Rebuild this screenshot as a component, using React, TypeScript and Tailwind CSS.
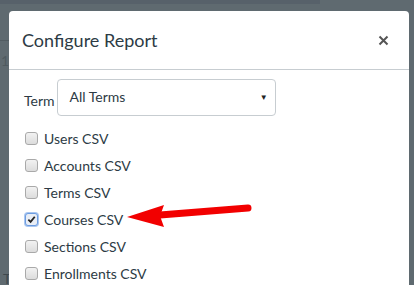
const reports = [
  { name: "Users CSV", checked: false },
  { name: "Accounts CSV", checked: false },
  { name: "Terms CSV", checked: false },
  { name: "Courses CSV", checked: true },
  { name: "Sections CSV", checked: false },
  { name: "Enrollments CSV", checked: false },
];

function Checkbox({ checked }: { checked: boolean }) {
  if (checked) {
    return (
      <span className="flex h-[13px] w-[13px] items-center justify-center rounded-[3px] border border-[#6c9ce0] bg-[#e9eef6] shadow-[0_0_0_1px_#a9c6f0]">
        <svg width="9" height="9" viewBox="0 0 10 10">
          <path d="M1.5 5.2 L4 7.6 L8.6 2" fill="none" stroke="#222" strokeWidth="2" />
        </svg>
      </span>
    );
  }
  return <span className="h-[13px] w-[13px] rounded-[3px] border border-[#a9a9a9] bg-gradient-to-b from-[#f2f2f2] to-[#dcdcdc]" />;
}

export default function App() {
  return (
    <div className="relative h-[285px] w-[414px] overflow-hidden bg-[#5f6a70] font-['Lato',sans-serif]">
      {/* page behind the overlay */}
      <div className="absolute left-0 top-0 h-[4px] w-[320px] bg-[#57616a]" />
      <div className="absolute left-0 top-[40px] h-px w-[9px] bg-[#525c62]" />
      <div className="absolute left-[1px] top-[50px] text-[14px] text-[#4f5a60]">15</div>
      <div className="absolute left-[3px] top-[268px] text-[14px] text-[#3e484e]">T</div>

      <div className="absolute left-[9px] top-[11px] h-[300px] w-[400px] rounded-[4px] bg-white">
        {/* header */}
        <div className="flex h-[59px] items-center justify-between border-b border-[#c7cdd1] pl-[13px] pr-[20px]">
          <h2 className="text-[18px] font-normal text-[#2d3b45]">Configure Report</h2>
          <svg width="11" height="11" viewBox="0 0 11 11">
            <path d="M1.5 1.5 L9.5 9.5 M9.5 1.5 L1.5 9.5" stroke="#555" strokeWidth="2" />
          </svg>
        </div>

        {/* body */}
        <div className="pl-[15px] pt-[9px]">
          <div className="flex items-end gap-[2px]">
            <span className="mb-[5px] text-[14px] text-[#2d3b45]">Term</span>
            <div className="flex h-[37px] w-[219px] items-center justify-between rounded-[4px] border border-[#c7cdd1] pl-[12px] pr-[7px] text-[14px] text-[#2d3b45]">
              <span className="-mt-[2px]">All Terms</span>
              <span className="-mt-[2px] text-[8px] text-[#222]">▼</span>
            </div>
          </div>

          <div className="mt-[9px] flex flex-col">
            {reports.map((r) => (
              <label key={r.name} className="flex h-[27px] items-center gap-[6px] pl-[1px] text-[14px] text-[#2d3b45]">
                <Checkbox checked={r.checked} />
                <span>{r.name}</span>
              </label>
            ))}
          </div>
        </div>

        {/* annotation arrow */}
        <svg className="absolute left-[115px] top-[190px]" width="130" height="35" viewBox="0 0 130 35">
          <path d="M124 7 L36 14" stroke="#f20000" strokeWidth="7" strokeLinecap="round" />
          <path d="M3 16 L40 4 L36 15 L40 26 Z" fill="#f20000" />
        </svg>
      </div>
    </div>
  );
}
